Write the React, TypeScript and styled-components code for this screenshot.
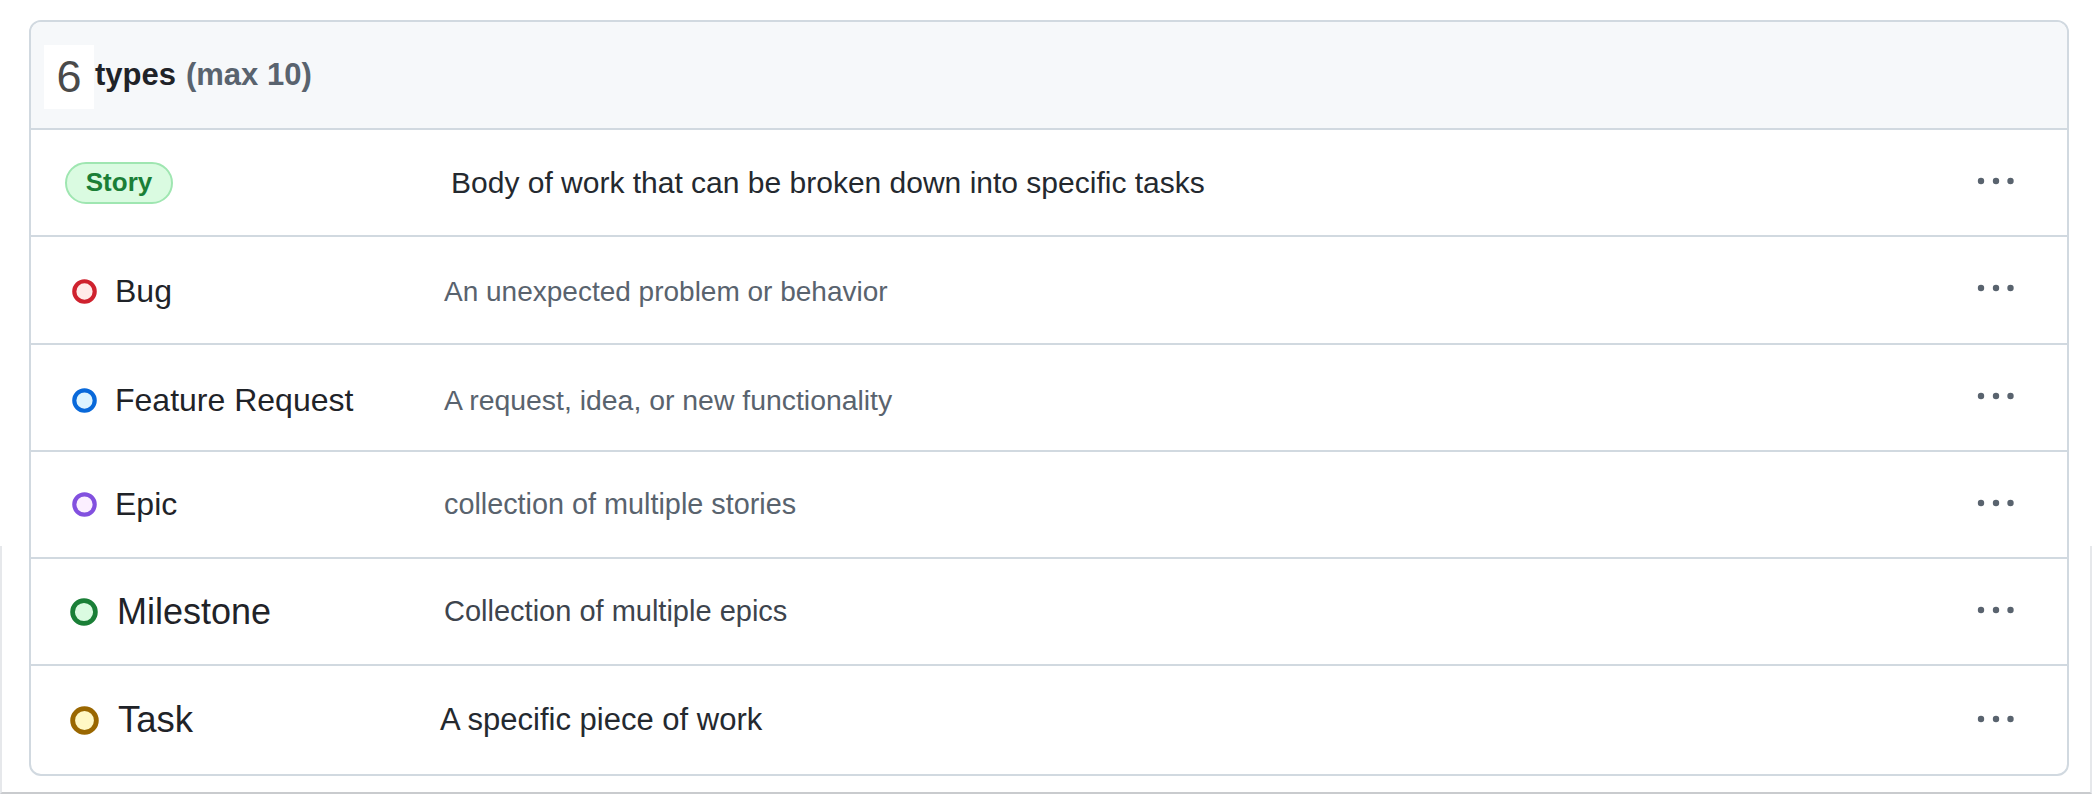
import styled, { createGlobalStyle } from 'styled-components';

const GlobalStyle = createGlobalStyle`
  html, body {
    margin: 0;
    padding: 0;
    background: #ffffff;
  }
  body {
    font-family: 'Liberation Sans', Arial, sans-serif;
    color: #1f2328;
  }
`;

type IssueType = {
  name: string;
  description: string;
  badge?: boolean;
  stroke?: string;
  fill?: string;
  iconSize?: number;
  nameSize?: number;
  nameGap?: number;
  descSize?: number;
  descColor?: string;
  descShift?: number;
  drop?: number;
};

// the lower rows come from a slightly larger capture, so sizes differ a bit per row
const TYPES: IssueType[] = [
  {
    name: 'Story',
    description: 'Body of work that can be broken down into specific tasks',
    badge: true,
    descSize: 30,
    descColor: '#24292f',
    descShift: 7,
  },
  {
    name: 'Bug',
    description: 'An unexpected problem or behavior',
    stroke: '#cf222e',
    fill: '#ffebe9',
    descSize: 28,
    drop: 2,
  },
  {
    name: 'Feature Request',
    description: 'A request, idea, or new functionality',
    stroke: '#0969da',
    fill: '#ddf4ff',
    descSize: 28.4,
    drop: 3,
  },
  {
    name: 'Epic',
    description: 'collection of multiple stories',
    stroke: '#8250df',
    fill: '#fbefff',
    descSize: 28.8,
  },
  {
    name: 'Milestone',
    description: 'Collection of multiple epics',
    stroke: '#1a7f37',
    fill: '#dafbe1',
    iconSize: 28,
    nameSize: 36,
    nameGap: 17,
    descSize: 29,
    descColor: '#3d444d',
  },
  {
    name: 'Task',
    description: 'A specific piece of work',
    stroke: '#9a6700',
    fill: '#fff8c5',
    iconSize: 29,
    nameSize: 36.5,
    nameGap: 18,
    descSize: 31,
    descColor: '#24292f',
    descShift: -4,
  },
];

const TypeIcon = ({ stroke, fill, size }: { stroke: string; fill: string; size: number }) => (
  <svg width={size} height={size} viewBox="0 0 24 24">
    <circle cx="12" cy="12" r="9.8" fill={fill} stroke={stroke} strokeWidth="4" />
  </svg>
);

const KebabIcon = () => (
  <svg width="38" height="8" viewBox="0 0 38 8">
    <circle cx="4" cy="4" r="3.2" fill="#59636e" />
    <circle cx="19" cy="4" r="3.2" fill="#59636e" />
    <circle cx="33.5" cy="4" r="3.2" fill="#59636e" />
  </svg>
);

const App = () => (
  <Page>
    <GlobalStyle />
    <BackFrame />
    <Card>
      <Header>
        <CountPatch>6</CountPatch>
        <HeaderTitle>types</HeaderTitle>
        <HeaderMax>(max 10)</HeaderMax>
      </Header>
      {TYPES.map((t) => (
        <Row key={t.name}>
          <NameCell $drop={t.drop ?? 0}>
            {t.badge ? (
              <Badge>{t.name}</Badge>
            ) : (
              <>
                <IconSlot $gap={t.nameGap ?? 15}>
                  <TypeIcon stroke={t.stroke!} fill={t.fill!} size={t.iconSize ?? 25} />
                </IconSlot>
                <Name $size={t.nameSize ?? 32}>{t.name}</Name>
              </>
            )}
          </NameCell>
          <Description
            $size={t.descSize ?? 28}
            $color={t.descColor ?? '#59636e'}
            $shift={t.descShift ?? 0}
            $drop={t.drop ?? 0}
          >
            {t.description}
          </Description>
          <MenuButton aria-label={`Actions for ${t.name}`}>
            <KebabIcon />
          </MenuButton>
        </Row>
      ))}
    </Card>
  </Page>
);

const Page = styled.div`
  position: relative;
  width: 2093px;
  height: 805px;
  padding: 20px 0 0 29px;
  box-sizing: border-box;
  overflow: hidden;
`;

const BackFrame = styled.div`
  position: absolute;
  left: 0;
  top: 546px;
  width: 2092px;
  height: 248px;
  box-sizing: border-box;
  border: 2px solid #e6e8eb;
  border-top: none;
  border-bottom-color: #c9cbce;
`;

const Card = styled.div`
  position: relative;
  width: 2040px;
  box-sizing: border-box;
  border: 2px solid #d1d9e0;
  border-radius: 12px;
  background: #ffffff;
  overflow: hidden;
`;

const Header = styled.div`
  display: flex;
  align-items: center;
  height: 108px;
  box-sizing: border-box;
  padding-left: 13px;
  background: #f6f8fa;
  border-bottom: 2px solid #d1d9e0;
`;

const CountPatch = styled.span`
  display: inline-flex;
  align-items: center;
  justify-content: center;
  width: 50px;
  height: 64px;
  margin-top: 4px;
  background: #ffffff;
  color: #4a4a4a;
  font-size: 45px;
  font-weight: 400;
`;

const HeaderTitle = styled.span`
  margin-left: 1px;
  font-size: 31px;
  font-weight: 700;
  color: #1f2328;
`;

const HeaderMax = styled.span`
  margin-left: 10px;
  font-size: 31px;
  font-weight: 700;
  color: #59636e;
`;

const Row = styled.div`
  display: grid;
  grid-template-columns: 413px 1fr auto;
  align-items: center;
  height: 107.3px;
  box-sizing: border-box;
  border-bottom: 2px solid #d1d9e0;

  &:last-child {
    border-bottom: none;
  }
`;

const NameCell = styled.div<{ $drop: number }>`
  display: flex;
  align-items: center;
  padding-left: 37px;
  margin-top: ${({ $drop }) => $drop * 2}px;
`;

const IconSlot = styled.span<{ $gap: number }>`
  display: inline-flex;
  align-items: center;
  justify-content: center;
  width: 32px;
  height: 32px;
  margin-right: ${({ $gap }) => $gap}px;
`;

const Name = styled.span<{ $size: number }>`
  font-size: ${({ $size }) => $size}px;
  color: #1f2328;
  white-space: nowrap;
`;

const Badge = styled.span`
  display: inline-flex;
  align-items: center;
  justify-content: center;
  margin-left: -3px;
  width: 108px;
  height: 42px;
  box-sizing: border-box;
  border: 2px solid #9fe6b1;
  border-radius: 21px;
  background: #dafbe1;
  color: #1a7f37;
  font-size: 26px;
  font-weight: 700;
`;

const Description = styled.span<{ $size: number; $color: string; $shift: number; $drop: number }>`
  margin-left: ${({ $shift }) => $shift}px;
  margin-top: ${({ $drop }) => $drop * 2}px;
  font-size: ${({ $size }) => $size}px;
  color: ${({ $color }) => $color};
  white-space: nowrap;
`;

const MenuButton = styled.button`
  display: flex;
  align-items: center;
  justify-content: center;
  margin: 0 52px 3px 0;
  padding: 0;
  border: 0;
  background: transparent;
  cursor: pointer;
`;

export default App;
